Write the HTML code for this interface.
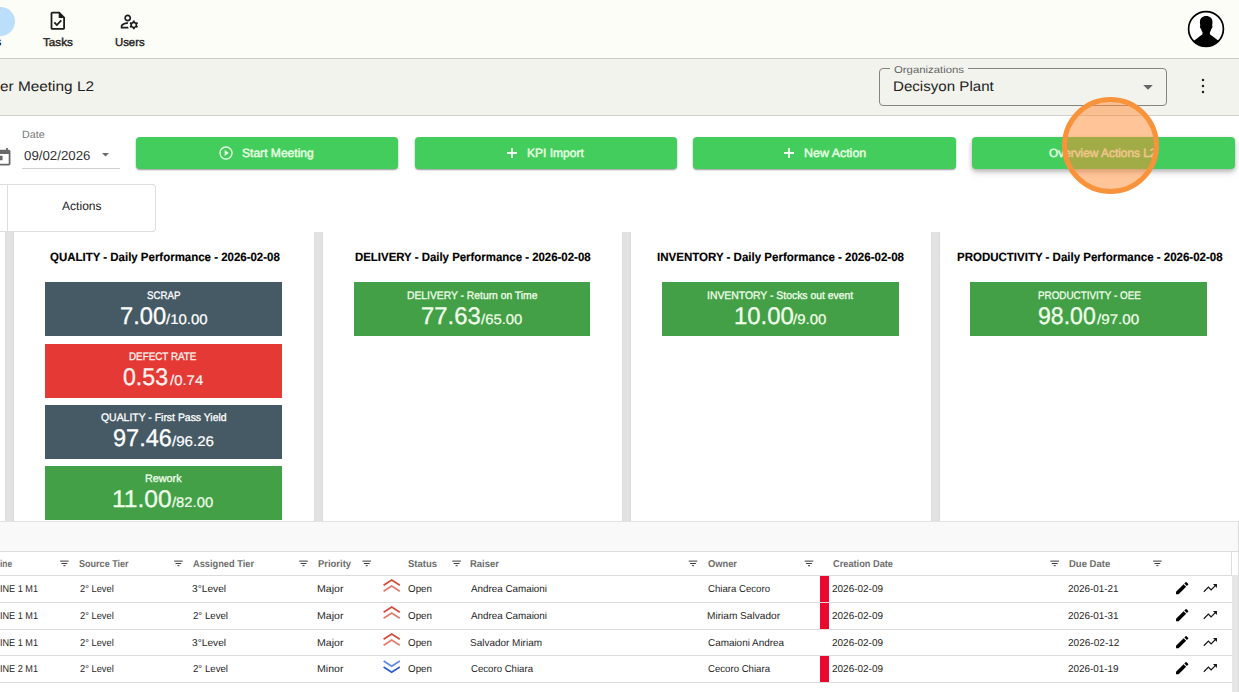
<!DOCTYPE html>
<html lang="en">
<head>
<meta charset="utf-8">
<title>Tier Meeting L2</title>
<style>
html,body{margin:0;padding:0;}
html{width:1239px;height:692px;overflow:hidden;}
body{width:1239px;height:692px;overflow:hidden;background:#fff;position:relative;font-family:"Liberation Sans",sans-serif;}
.a{position:absolute;}
.t{position:absolute;white-space:nowrap;line-height:1em;text-rendering:geometricPrecision;transform-origin:0 50%;font-family:"Liberation Sans",sans-serif;}
.t .sm{font-size:14px;}
.btn{position:absolute;top:137px;height:32px;background:#43cd5d;border-radius:4px;box-shadow:0 1px 2px rgba(0,0,0,.28),0 1px 1.500px rgba(0,0,0,.16);}
.gut{position:absolute;top:232px;height:288.5px;width:9px;background:#e2e2e2;box-shadow:inset -1px 0 0 #dadada,inset 1px 0 0 #dedede;}
.tile{position:absolute;height:53.5px;}
.bg{background:#455a64;}.rd{background:#e53935;}.gr{background:#43a047;}
.hl{position:absolute;left:0;width:1232px;height:1px;background:#dcdcdc;}
.bar{position:absolute;left:820px;width:8.8px;background:#e9082e;}
svg{position:absolute;overflow:visible;}
</style>
</head>
<body>
<!-- top nav -->
<div class="a" style="left:0;top:0;width:1239px;height:58px;background:#fdfdf8;"></div>
<div class="a" style="left:0;top:58px;width:1239px;height:1px;background:#cbcbc8;"></div>
<div class="a" style="left:-14.1px;top:6.9px;width:28.8px;height:28.8px;border-radius:50%;background:#bbdefb;"></div>
<!-- title bar -->
<div class="a" style="left:0;top:59px;width:1239px;height:56px;background:#f3f3ee;"></div>
<div class="a" style="left:0;top:115px;width:1239px;height:1px;background:#cfcfcc;"></div>


<!--ICONS_START--><!-- nav icons -->
<svg style="left:47.4px;top:10.3px" width="21.6" height="21.6" viewBox="0 0 24 24" fill="#1c1c1c"><g><path d="M14 2H6c-1.1 0-1.99.9-1.99 2L4 20c0 1.1.89 2 1.99 2H18c1.1 0 2-.9 2-2V8l-6-6zm4 18H6V4h7v5h5v11zm-9.18-6.95L7.4 14.46 10.94 18l5.66-5.66-1.41-1.41-4.24 4.24-2.13-2.12z"/></g></svg>
<svg style="left:119.06px;top:11.2px" width="20.9" height="20.9" viewBox="0 0 24 24" fill="#1c1c1c"><path d="M4 18v-.65c0-.34.16-.66.41-.81C6.100 15.530 8.030 15 10 15c.03 0 .05 0 .08.01.1-.7.3-1.370.59-1.980-.22-.02-.44-.03-.67-.03-2.420 0-4.680.67-6.610 1.820-.88.520-1.390 1.500-1.390 2.530V20h9.260c-.42-.6-.75-1.280-.97-2H4zM10 12c2.210 0 4-1.790 4-4s-1.790-4-4-4-4 1.790-4 4 1.790 4 4 4zm0-6c1.100 0 2 .9 2 2s-.9 2-2 2-2-.9-2-2 .9-2 2-2zM20.750 16c0-.22-.03-.42-.06-.63l1.140-1.010-1-1.730-1.450.49c-.32-.27-.68-.48-1.080-.63L18 11h-2l-.3 1.490c-.4.15-.76.360-1.080.63l-1.450-.49-1 1.730 1.140 1.010c-.3.210-.6.410-.6.630s.3.420.6.630l-1.140 1.010 1 1.730 1.450-.49c.32.270.68.480 1.080.63L16 21h2l.3-1.490c.4-.15.760-.36 1.080-.63l1.450.49 1-1.730-1.140-1.010c.03-.21.060-.41.060-.63zM17 18c-1.100 0-2-.9-2-2s.9-2 2-2 2 .9 2 2-.9 2-2 2z"/></svg>
<!-- "s" fragment of cut-off label -->
<span class="a" style="left:-5.2px;top:35.9px;font-size:12px;line-height:1em;font-weight:700;color:#111;">s</span>
<!-- avatar -->
<svg style="left:1187px;top:10px" width="38" height="38" viewBox="0 0 38 38">
 <defs><clipPath id="avc"><circle cx="19" cy="19" r="17.3"/></clipPath></defs>
 <circle cx="19" cy="19" r="17.4" fill="#fff" stroke="#000" stroke-width="1.7"/>
 <g clip-path="url(#avc)" fill="#000">
  <path d="M19.2 6C23 6 25.5 8.500 25.500 12c0 1.500-.2 2.500-.4 3.500.5.300.5 1.300.2 2.100-.2.700-.5 1.100-.9 1.300-.5 1.600-1.200 2.700-1.500 3.400v2c1.100 1.200 4.600 3.200 7.600 5.700L36 34v6H2v-6l5.900-4c3-2.500 6.500-4.500 7.600-5.700v-2c-.3-.7-1-1.800-1.500-3.400-.4-.2-.7-.6-.9-1.300-.3-.8-.3-1.800.2-2.100-.2-1-.4-2-.4-3.500C12.900 8.500 15.400 6 19.200 6z"/>
 </g>
</svg>
<!-- organizations select -->
<div class="a" style="left:879px;top:68px;width:285.500px;height:35.600px;border:1px solid #858580;border-radius:4px;box-sizing:content-box;"></div>
<div class="a" style="left:889.7px;top:66px;width:78.500px;height:5px;background:#f3f3ee;"></div>
<svg style="left:1143px;top:85px" width="10" height="5" viewBox="0 0 10 5"><path d="M0.200 0.100h9.700L5.050 4.700z" fill="#666"/></svg>
<svg style="left:1201px;top:78px" width="4" height="16" viewBox="0 0 4 16" fill="#222"><circle cx="2" cy="2" r="1.250"/><circle cx="2" cy="8" r="1.250"/><circle cx="2" cy="14" r="1.250"/></svg>
<!-- date field -->
<svg style="left:-7.700px;top:147.100px" width="21.100" height="21.100" viewBox="0 0 24 24" fill="#686868"><path d="M19 3h-1V1h-2v2H8V1H6v2H5c-1.110 0-1.990.9-1.990 2L3 19c0 1.100.89 2 2 2h14c1.100 0 2-.9 2-2V5c0-1.100-.9-2-2-2zm0 16H5V8h14v11zM7 10h5v5H7z"/></svg>
<div class="a" style="left:22px;top:168px;width:98px;height:1px;background:#d0d0d0;"></div>
<svg style="left:102.200px;top:153.300px" width="7" height="3.700" viewBox="0 0 10 5"><path d="M0 0h10L5 5z" fill="#6a6a6a"/></svg>
<!-- buttons -->
<div class="btn" style="left:136px;width:262px;"></div>
<div class="btn" style="left:415px;width:262px;"></div>
<div class="btn" style="left:693px;width:262.700px;"></div>
<div class="btn" style="left:972px;width:263px;box-shadow:0 2px 4px rgba(0,0,0,.22),0 4px 7px rgba(0,0,0,.12);"></div>
<svg style="left:217.600px;top:144.900px" width="16" height="16" viewBox="0 0 24 24" fill="#e6ffe2"><path d="M10 16.500l6-4.500-6-4.500v9zM12 2C6.480 2 2 6.480 2 12s4.480 10 10 10 10-4.480 10-10S17.520 2 12 2zm0 18c-4.410 0-8-3.590-8-8s3.590-8 8-8 8 3.590 8 8-3.590 8-8 8z"/></svg>
<svg style="left:507px;top:148px" width="10" height="10" viewBox="0 0 10 10" fill="#f0fff0"><path d="M4.100 0h1.800v4.100H10v1.800H5.900V10H4.100V5.900H0V4.100h4.100z"/></svg>
<svg style="left:783.700px;top:148px" width="10" height="10" viewBox="0 0 10 10" fill="#f0fff0"><path d="M4.100 0h1.800v4.100H10v1.800H5.900V10H4.100V5.900H0V4.100h4.100z"/></svg>
<!-- tabs -->
<div class="a" style="left:-60px;top:184px;width:214.200px;height:45.600px;border:1px solid #dedede;border-radius:3px;background:#fff;"></div>
<div class="a" style="left:7px;top:184px;width:1px;height:47px;background:#dedede;"></div>
<!-- card gutters -->
<div class="gut" style="left:5px;"></div>
<div class="gut" style="left:314px;"></div>
<div class="gut" style="left:622px;"></div>
<div class="gut" style="left:931px;"></div>
<!-- KPI tiles -->
<div class="tile bg" style="left:45px;top:282px;width:236.700px;"></div>
<div class="tile rd" style="left:45px;top:344px;width:236.700px;"></div>
<div class="tile bg" style="left:45px;top:405px;width:236.700px;"></div>
<div class="tile gr" style="left:45px;top:466px;width:236.700px;"></div>
<div class="tile gr" style="left:354px;top:282px;width:235.700px;"></div>
<div class="tile gr" style="left:662px;top:282px;width:237px;"></div>
<div class="tile gr" style="left:970.300px;top:282px;width:236.600px;"></div>
<!-- grid panel -->
<div class="a" style="left:0;top:520.500px;width:1238px;height:170.500px;background:#f9f9f9;border-top:1px solid #e2e2e2;border-right:1px solid #dcdcdc;"></div>
<div class="a" style="left:0;top:551px;width:1238px;height:140px;background:#fff;border-top:1px solid #dcdcdc;"></div>
<div class="a" style="left:1231.500px;top:575px;width:6.500px;height:117px;background:#e6e6e6;"></div>
<div class="a" style="left:1231px;top:552px;width:1px;height:23px;background:#dedede;"></div>
<div class="hl" style="top:574.800px;"></div>
<div class="hl" style="top:601.800px;"></div>
<div class="hl" style="top:628.800px;"></div>
<div class="hl" style="top:655px;"></div>
<div class="hl" style="top:682px;"></div>
<div class="bar" style="top:576.300px;height:25.400px;"></div>
<div class="bar" style="top:603.300px;height:25.400px;"></div>
<div class="bar" style="top:655.800px;height:26px;"></div>
<svg style="left:382.5px;top:579.40px" width="17.4" height="13" viewBox="0 0 17.4 13" fill="none" stroke-width="1.65" stroke-linejoin="miter"><path d="M0.6 6.300L8.7 1.100l8.100 5.200" stroke="#d14a3a"/><path d="M0.6 12.300L8.7 7.100l8.100 5.200" stroke="#de7a6c"/></svg>
<svg style="left:1173.75px;top:579.65px" width="16.4" height="16.4" viewBox="0 0 24 24" fill="#000"><path d="M3 17.250V21h3.750L17.810 9.940l-3.750-3.750L3 17.250zM20.710 7.040c.39-.39.39-1.020 0-1.410l-2.340-2.340c-.39-.39-1.020-.39-1.410 0l-1.830 1.830 3.750 3.750 1.830-1.830z"/></svg>
<svg style="left:1202.2px;top:579.70px" width="16.300" height="16.300" viewBox="0 0 24 24" fill="#111"><path d="M2.700 17.300l6.700-6.700 4 4 6.600-6.600" fill="none" stroke="#111" stroke-width="1.750"/><path d="M16.200 6H22v5.800z"/></svg>
<svg style="left:382.5px;top:606.40px" width="17.4" height="13" viewBox="0 0 17.4 13" fill="none" stroke-width="1.65" stroke-linejoin="miter"><path d="M0.6 6.300L8.7 1.100l8.100 5.200" stroke="#d14a3a"/><path d="M0.6 12.300L8.7 7.100l8.100 5.200" stroke="#de7a6c"/></svg>
<svg style="left:1173.75px;top:606.65px" width="16.4" height="16.4" viewBox="0 0 24 24" fill="#000"><path d="M3 17.250V21h3.750L17.810 9.940l-3.750-3.750L3 17.250zM20.710 7.040c.39-.39.39-1.020 0-1.410l-2.340-2.340c-.39-.39-1.020-.39-1.410 0l-1.830 1.830 3.750 3.750 1.830-1.830z"/></svg>
<svg style="left:1202.2px;top:606.70px" width="16.300" height="16.300" viewBox="0 0 24 24" fill="#111"><path d="M2.700 17.300l6.700-6.700 4 4 6.600-6.600" fill="none" stroke="#111" stroke-width="1.750"/><path d="M16.200 6H22v5.800z"/></svg>
<svg style="left:382.5px;top:633.40px" width="17.4" height="13" viewBox="0 0 17.4 13" fill="none" stroke-width="1.65" stroke-linejoin="miter"><path d="M0.6 6.300L8.7 1.100l8.100 5.200" stroke="#d14a3a"/><path d="M0.6 12.300L8.7 7.100l8.100 5.200" stroke="#de7a6c"/></svg>
<svg style="left:1173.75px;top:633.65px" width="16.4" height="16.4" viewBox="0 0 24 24" fill="#000"><path d="M3 17.250V21h3.750L17.810 9.940l-3.750-3.750L3 17.250zM20.710 7.040c.39-.39.39-1.020 0-1.410l-2.340-2.340c-.39-.39-1.020-.39-1.410 0l-1.830 1.830 3.750 3.750 1.830-1.830z"/></svg>
<svg style="left:1202.2px;top:633.70px" width="16.300" height="16.300" viewBox="0 0 24 24" fill="#111"><path d="M2.700 17.300l6.700-6.700 4 4 6.600-6.600" fill="none" stroke="#111" stroke-width="1.750"/><path d="M16.200 6H22v5.800z"/></svg>
<svg style="left:382.5px;top:659.60px" width="17.4" height="13" viewBox="0 0 17.4 13" fill="none" stroke-width="1.65" stroke-linejoin="miter"><path d="M0.6 1L8.7 6.200l8.100-5.200" stroke="#5b88e0"/><path d="M0.6 7L8.7 12.200l8.100-5.200" stroke="#2a5ec8"/></svg>
<svg style="left:1173.75px;top:659.85px" width="16.4" height="16.4" viewBox="0 0 24 24" fill="#000"><path d="M3 17.250V21h3.750L17.810 9.940l-3.750-3.750L3 17.250zM20.710 7.040c.39-.39.39-1.020 0-1.410l-2.340-2.340c-.39-.39-1.020-.39-1.410 0l-1.830 1.830 3.750 3.750 1.830-1.830z"/></svg>
<svg style="left:1202.2px;top:659.90px" width="16.300" height="16.300" viewBox="0 0 24 24" fill="#111"><path d="M2.700 17.300l6.700-6.700 4 4 6.600-6.600" fill="none" stroke="#111" stroke-width="1.750"/><path d="M16.200 6H22v5.800z"/></svg>


<svg style="left:60px;top:560px" width="10" height="7" viewBox="0 0 10 7" fill="#3c3c3c"><rect x="0.10" y="0.550" width="8.6" height="1.150" fill="#555"/><rect x="1.50" y="3" width="5.8" height="1"/><rect x="3.40" y="5.150" width="2" height="1.050"/></svg>
<svg style="left:174px;top:560px" width="10" height="7" viewBox="0 0 10 7" fill="#3c3c3c"><rect x="0.10" y="0.550" width="8.6" height="1.150" fill="#555"/><rect x="1.50" y="3" width="5.8" height="1"/><rect x="3.40" y="5.150" width="2" height="1.050"/></svg>
<svg style="left:299px;top:560px" width="10" height="7" viewBox="0 0 10 7" fill="#3c3c3c"><rect x="0.20" y="0.550" width="8.6" height="1.150" fill="#555"/><rect x="1.60" y="3" width="5.8" height="1"/><rect x="3.50" y="5.150" width="2" height="1.050"/></svg>
<svg style="left:362px;top:560px" width="10" height="7" viewBox="0 0 10 7" fill="#3c3c3c"><rect x="0.45" y="0.550" width="8.6" height="1.150" fill="#555"/><rect x="1.85" y="3" width="5.8" height="1"/><rect x="3.75" y="5.150" width="2" height="1.050"/></svg>
<svg style="left:452px;top:560px" width="10" height="7" viewBox="0 0 10 7" fill="#3c3c3c"><rect x="0.30" y="0.550" width="8.6" height="1.150" fill="#555"/><rect x="1.70" y="3" width="5.8" height="1"/><rect x="3.60" y="5.150" width="2" height="1.050"/></svg>
<svg style="left:688px;top:560px" width="10" height="7" viewBox="0 0 10 7" fill="#3c3c3c"><rect x="0.70" y="0.550" width="8.6" height="1.150" fill="#555"/><rect x="2.10" y="3" width="5.8" height="1"/><rect x="4.00" y="5.150" width="2" height="1.050"/></svg>
<svg style="left:804px;top:560px" width="10" height="7" viewBox="0 0 10 7" fill="#3c3c3c"><rect x="0.70" y="0.550" width="8.6" height="1.150" fill="#555"/><rect x="2.10" y="3" width="5.8" height="1"/><rect x="4.00" y="5.150" width="2" height="1.050"/></svg>
<svg style="left:1050px;top:560px" width="10" height="7" viewBox="0 0 10 7" fill="#3c3c3c"><rect x="0.40" y="0.550" width="8.6" height="1.150" fill="#555"/><rect x="1.80" y="3" width="5.8" height="1"/><rect x="3.70" y="5.150" width="2" height="1.050"/></svg>
<svg style="left:1153px;top:560px" width="10" height="7" viewBox="0 0 10 7" fill="#3c3c3c"><rect x="0.10" y="0.550" width="8.6" height="1.150" fill="#555"/><rect x="1.50" y="3" width="5.8" height="1"/><rect x="3.40" y="5.150" width="2" height="1.050"/></svg>
<!--ICONS_END-->
<span class="t" id="t0" style="left:42.90px;top:38.43px;font-size:11.3px;color:#1c1c1c;-webkit-text-stroke:0.4px #1c1c1c;transform:scaleX(1.0315)">Tasks</span>
<span class="t" id="t1" style="left:114.70px;top:38.43px;font-size:11.3px;color:#1c1c1c;-webkit-text-stroke:0.4px #1c1c1c;transform:scaleX(1.0041)">Users</span>
<span class="t" id="t2" style="left:0.30px;top:79.15px;font-size:14px;color:#222;transform:scaleX(1.0981)">er Meeting L2</span>
<span class="t" id="t3" style="left:894.30px;top:66.33px;font-size:10px;color:#666;transform:scaleX(1.1345)">Organizations</span>
<span class="t" id="t4" style="left:893.30px;top:79.15px;font-size:14px;color:#222;transform:scaleX(1.0793)">Decisyon Plant</span>
<span class="t" id="t5" style="left:21.90px;top:129.91px;font-size:10.5px;color:#777;transform:scaleX(1.0198)">Date</span>
<span class="t" id="t6" style="left:24.10px;top:148.90px;font-size:13px;color:#333;transform:scaleX(1.0203)">09/02/2026</span>
<span class="t" id="t7" style="left:241.50px;top:146.84px;font-size:12px;color:#e6ffe2;-webkit-text-stroke:0.45px #e6ffe2;transform:scaleX(1.0059)">Start Meeting</span>
<span class="t" id="t8" style="left:526.70px;top:146.84px;font-size:12px;color:#e6ffe2;-webkit-text-stroke:0.45px #e6ffe2;transform:scaleX(1.0020)">KPI Import</span>
<span class="t" id="t9" style="left:803.50px;top:146.84px;font-size:12px;color:#e6ffe2;-webkit-text-stroke:0.45px #e6ffe2;transform:scaleX(1.0364)">New Action</span>
<span class="t" id="t10" style="left:1049.30px;top:146.84px;font-size:12px;color:#e6ffe2;-webkit-text-stroke:0.45px #e6ffe2;transform:scaleX(0.9879)">Overview Actions L2</span>
<span class="t" id="t11" style="left:61.50px;top:199.54px;font-size:12px;color:#222;transform:scaleX(1.0061)">Actions</span>
<span class="t" id="t12" style="left:49.70px;top:251.14px;font-size:12px;color:#000;font-weight:700;-webkit-text-stroke:0.15px #000;transform:scaleX(0.9553)">QUALITY - Daily Performance - 2026-02-08</span>
<span class="t" id="t13" style="left:354.70px;top:251.14px;font-size:12px;color:#000;font-weight:700;-webkit-text-stroke:0.15px #000;transform:scaleX(0.9521)">DELIVERY - Daily Performance - 2026-02-08</span>
<span class="t" id="t14" style="left:656.50px;top:251.14px;font-size:12px;color:#000;font-weight:700;-webkit-text-stroke:0.15px #000;transform:scaleX(0.9602)">INVENTORY - Daily Performance - 2026-02-08</span>
<span class="t" id="t15" style="left:956.70px;top:251.14px;font-size:12px;color:#000;font-weight:700;-webkit-text-stroke:0.15px #000;transform:scaleX(0.9581)">PRODUCTIVITY - Daily Performance - 2026-02-08</span>
<span class="t" id="t16" style="left:146.50px;top:290.69px;font-size:11px;color:#fff;-webkit-text-stroke:0.3px #fff;transform:scaleX(0.8809)">SCRAP</span>
<span class="t" id="t17" style="left:119.50px;top:304.88px;font-size:24px;color:#fff;-webkit-text-stroke:0.3px #fff;transform:scaleX(0.9896)">7.00</span>
<span class="t" id="t18" style="left:165.90px;top:312.35px;font-size:14px;color:#fff;-webkit-text-stroke:0.2px #fff;transform:scaleX(1.0684)">/10.00</span>
<span class="t" id="t19" style="left:129.10px;top:351.59px;font-size:11px;color:#fff4f0;-webkit-text-stroke:0.3px #fff4f0;transform:scaleX(0.8940)">DEFECT RATE</span>
<span class="t" id="t20" style="left:123.30px;top:365.78px;font-size:24px;color:#fff4f0;-webkit-text-stroke:0.3px #fff4f0;transform:scaleX(0.9637)">0.53</span>
<span class="t" id="t21" style="left:169.50px;top:373.25px;font-size:14px;color:#fff4f0;-webkit-text-stroke:0.2px #fff4f0;transform:scaleX(1.0662)">/0.74</span>
<span class="t" id="t22" style="left:100.50px;top:412.59px;font-size:11px;color:#fff;-webkit-text-stroke:0.3px #fff;transform:scaleX(0.9482)">QUALITY - First Pass Yield</span>
<span class="t" id="t23" style="left:113.30px;top:426.78px;font-size:24px;color:#fff;-webkit-text-stroke:0.3px #fff;transform:scaleX(0.9795)">97.46</span>
<span class="t" id="t24" style="left:172.10px;top:434.25px;font-size:14px;color:#fff;-webkit-text-stroke:0.2px #fff;transform:scaleX(1.0787)">/96.26</span>
<span class="t" id="t25" style="left:145.30px;top:473.69px;font-size:11px;color:#f0ffea;-webkit-text-stroke:0.3px #f0ffea;transform:scaleX(0.9817)">Rework</span>
<span class="t" id="t26" style="left:112.30px;top:487.78px;font-size:24px;color:#f0ffea;-webkit-text-stroke:0.3px #f0ffea;transform:scaleX(1.0242)">11.00</span>
<span class="t" id="t27" style="left:172.30px;top:495.25px;font-size:14px;color:#f0ffea;-webkit-text-stroke:0.2px #f0ffea;transform:scaleX(1.0581)">/82.00</span>
<span class="t" id="t28" style="left:406.90px;top:290.69px;font-size:11px;color:#f0ffea;-webkit-text-stroke:0.3px #f0ffea;transform:scaleX(0.9381)">DELIVERY - Return on Time</span>
<span class="t" id="t29" style="left:421.30px;top:304.78px;font-size:24px;color:#f0ffea;-webkit-text-stroke:0.3px #f0ffea;transform:scaleX(0.9929)">77.63</span>
<span class="t" id="t30" style="left:480.50px;top:312.25px;font-size:14px;color:#f0ffea;-webkit-text-stroke:0.2px #f0ffea;transform:scaleX(1.0631)">/65.00</span>
<span class="t" id="t31" style="left:706.50px;top:290.69px;font-size:11px;color:#f0ffea;-webkit-text-stroke:0.3px #f0ffea;transform:scaleX(0.9451)">INVENTORY - Stocks out event</span>
<span class="t" id="t32" style="left:733.50px;top:304.78px;font-size:24px;color:#f0ffea;-webkit-text-stroke:0.3px #f0ffea;transform:scaleX(0.9967)">10.00</span>
<span class="t" id="t33" style="left:793.30px;top:312.25px;font-size:14px;color:#f0ffea;-webkit-text-stroke:0.2px #f0ffea;transform:scaleX(1.0725)">/9.00</span>
<span class="t" id="t34" style="left:1037.70px;top:290.69px;font-size:11px;color:#f0ffea;-webkit-text-stroke:0.3px #f0ffea;transform:scaleX(0.8963)">PRODUCTIVITY - OEE</span>
<span class="t" id="t35" style="left:1038.30px;top:304.78px;font-size:24px;color:#f0ffea;-webkit-text-stroke:0.3px #f0ffea;transform:scaleX(0.9625)">98.00</span>
<span class="t" id="t36" style="left:1097.10px;top:312.25px;font-size:14px;color:#f0ffea;-webkit-text-stroke:0.2px #f0ffea;transform:scaleX(1.0836)">/97.00</span>
<span class="t" id="t37" style="left:-0.20px;top:560.43px;font-size:10px;color:#6e6e6e;font-weight:700;transform:scaleX(0.8388)">ine</span>
<span class="t" id="t38" style="left:78.90px;top:560.43px;font-size:10px;color:#6e6e6e;font-weight:700;transform:scaleX(0.9044)">Source Tier</span>
<span class="t" id="t39" style="left:192.50px;top:560.43px;font-size:10px;color:#6e6e6e;font-weight:700;transform:scaleX(0.9251)">Assigned Tier</span>
<span class="t" id="t40" style="left:317.50px;top:560.43px;font-size:10px;color:#6e6e6e;font-weight:700;transform:scaleX(0.9430)">Priority</span>
<span class="t" id="t41" style="left:407.50px;top:560.43px;font-size:10px;color:#6e6e6e;font-weight:700;transform:scaleX(0.9489)">Status</span>
<span class="t" id="t42" style="left:469.50px;top:560.43px;font-size:10px;color:#6e6e6e;font-weight:700;transform:scaleX(0.9484)">Raiser</span>
<span class="t" id="t43" style="left:707.50px;top:560.43px;font-size:10px;color:#6e6e6e;font-weight:700;transform:scaleX(0.9317)">Owner</span>
<span class="t" id="t44" style="left:832.50px;top:560.43px;font-size:10px;color:#6e6e6e;font-weight:700;transform:scaleX(0.9229)">Creation Date</span>
<span class="t" id="t45" style="left:1068.50px;top:560.43px;font-size:10px;color:#6e6e6e;font-weight:700;transform:scaleX(0.9510)">Due Date</span>
<span class="t" id="t46" style="left:-0.30px;top:585.43px;font-size:10px;color:#262626;transform:scaleX(0.9117)">INE 1 M1</span>
<span class="t" id="t47" style="left:79.70px;top:585.43px;font-size:10px;color:#262626;transform:scaleX(0.9321)">2° Level</span>
<span class="t" id="t48" style="left:191.50px;top:585.43px;font-size:10px;color:#262626;transform:scaleX(1.0178)">3°Level</span>
<span class="t" id="t49" style="left:317.10px;top:585.43px;font-size:10px;color:#262626;transform:scaleX(1.0572)">Major</span>
<span class="t" id="t50" style="left:407.50px;top:585.43px;font-size:10px;color:#262626;transform:scaleX(0.9808)">Open</span>
<span class="t" id="t51" style="left:470.50px;top:585.43px;font-size:10px;color:#262626;transform:scaleX(0.9836)">Andrea Camaioni</span>
<span class="t" id="t52" style="left:707.50px;top:585.43px;font-size:10px;color:#262626;transform:scaleX(0.9614)">Chiara Cecoro</span>
<span class="t" id="t53" style="left:831.50px;top:585.43px;font-size:10px;color:#262626;transform:scaleX(0.9969)">2026-02-09</span>
<span class="t" id="t54" style="left:1068.10px;top:585.43px;font-size:10px;color:#262626;transform:scaleX(0.9897)">2026-01-21</span>
<span class="t" id="t55" style="left:-0.30px;top:611.53px;font-size:10px;color:#262626;transform:scaleX(0.9117)">INE 1 M1</span>
<span class="t" id="t56" style="left:79.70px;top:611.53px;font-size:10px;color:#262626;transform:scaleX(0.9321)">2° Level</span>
<span class="t" id="t57" style="left:192.50px;top:611.53px;font-size:10px;color:#262626;transform:scaleX(0.9655)">2° Level</span>
<span class="t" id="t58" style="left:317.10px;top:611.53px;font-size:10px;color:#262626;transform:scaleX(1.0572)">Major</span>
<span class="t" id="t59" style="left:407.50px;top:611.53px;font-size:10px;color:#262626;transform:scaleX(0.9808)">Open</span>
<span class="t" id="t60" style="left:470.50px;top:611.53px;font-size:10px;color:#262626;transform:scaleX(0.9836)">Andrea Camaioni</span>
<span class="t" id="t61" style="left:706.50px;top:611.53px;font-size:10px;color:#262626;transform:scaleX(1.0106)">Miriam Salvador</span>
<span class="t" id="t62" style="left:831.50px;top:611.53px;font-size:10px;color:#262626;transform:scaleX(0.9969)">2026-02-09</span>
<span class="t" id="t63" style="left:1068.10px;top:611.53px;font-size:10px;color:#262626;transform:scaleX(0.9897)">2026-01-31</span>
<span class="t" id="t64" style="left:-0.30px;top:639.43px;font-size:10px;color:#262626;transform:scaleX(0.9117)">INE 1 M1</span>
<span class="t" id="t65" style="left:79.70px;top:639.43px;font-size:10px;color:#262626;transform:scaleX(0.9321)">2° Level</span>
<span class="t" id="t66" style="left:191.50px;top:639.43px;font-size:10px;color:#262626;transform:scaleX(1.0178)">3°Level</span>
<span class="t" id="t67" style="left:317.10px;top:639.43px;font-size:10px;color:#262626;transform:scaleX(1.0572)">Major</span>
<span class="t" id="t68" style="left:407.50px;top:639.43px;font-size:10px;color:#262626;transform:scaleX(0.9808)">Open</span>
<span class="t" id="t69" style="left:469.50px;top:639.43px;font-size:10px;color:#262626;transform:scaleX(0.9965)">Salvador Miriam</span>
<span class="t" id="t70" style="left:707.50px;top:639.43px;font-size:10px;color:#262626;transform:scaleX(0.9906)">Camaioni Andrea</span>
<span class="t" id="t71" style="left:831.50px;top:639.43px;font-size:10px;color:#262626;transform:scaleX(0.9969)">2026-02-09</span>
<span class="t" id="t72" style="left:1068.10px;top:639.43px;font-size:10px;color:#262626;transform:scaleX(1.0054)">2026-02-12</span>
<span class="t" id="t73" style="left:-0.30px;top:665.33px;font-size:10px;color:#262626;transform:scaleX(0.9117)">INE 2 M1</span>
<span class="t" id="t74" style="left:79.70px;top:665.33px;font-size:10px;color:#262626;transform:scaleX(0.9321)">2° Level</span>
<span class="t" id="t75" style="left:192.50px;top:665.33px;font-size:10px;color:#262626;transform:scaleX(0.9655)">2° Level</span>
<span class="t" id="t76" style="left:317.10px;top:665.33px;font-size:10px;color:#262626;transform:scaleX(1.0559)">Minor</span>
<span class="t" id="t77" style="left:407.50px;top:665.33px;font-size:10px;color:#262626;transform:scaleX(0.9808)">Open</span>
<span class="t" id="t78" style="left:470.50px;top:665.33px;font-size:10px;color:#262626;transform:scaleX(0.9615)">Cecoro Chiara</span>
<span class="t" id="t79" style="left:707.50px;top:665.33px;font-size:10px;color:#262626;transform:scaleX(0.9616)">Cecoro Chiara</span>
<span class="t" id="t80" style="left:831.50px;top:665.33px;font-size:10px;color:#262626;transform:scaleX(0.9969)">2026-02-09</span>
<span class="t" id="t81" style="left:1068.10px;top:665.33px;font-size:10px;color:#262626;transform:scaleX(0.9897)">2026-01-19</span>

<div class="a ov" style="left:1061.500px;top:96.500px;width:87.600px;height:87.600px;border-radius:50%;border:5px solid #f8933c;background:rgba(255,140,50,.5);"></div>
</body>
</html>
